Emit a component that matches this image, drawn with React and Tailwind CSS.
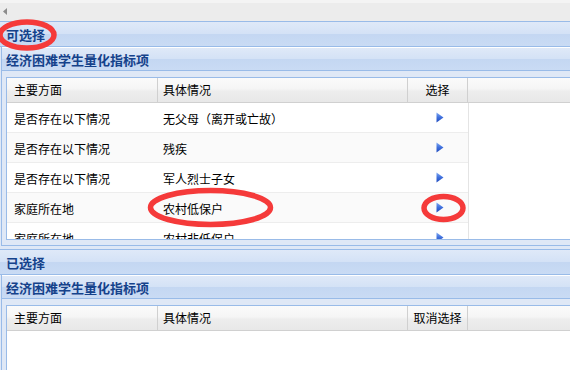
import React from "react";

const hdrGrad =
  "bg-[linear-gradient(180deg,#dfe9f8_0%,#d4e2f6_48%,#c4d7f2_52%,#c9dbf4_100%)]";
const gridHdrGrad =
  "bg-[linear-gradient(180deg,#fbfbfb_0%,#f5f5f5_45%,#ededed_55%,#e8e8e8_100%)]";

function Arrow() {
  return (
    <svg width="8" height="11" viewBox="0 0 8 11">
      <defs>
        <linearGradient id="arrowGrad" x1="0" y1="0" x2="0" y2="1">
          <stop offset="0" stopColor="#7ea8f2" />
          <stop offset="0.5" stopColor="#3f6fdc" />
          <stop offset="1" stopColor="#1d49bd" />
        </linearGradient>
      </defs>
      <polygon points="0.5,0.5 7.5,5.5 0.5,10.5" fill="url(#arrowGrad)" />
    </svg>
  );
}

function GridHeader({ last }) {
  return (
    <div className={`flex h-[25px] border-b border-[#d0d0d0] ${gridHdrGrad} text-black`}>
      <div className="w-[151px] shrink-0 border-r border-[#d0d0d0] pl-[7px] flex items-center">主要方面</div>
      <div className="w-[250px] shrink-0 border-r border-[#d0d0d0] pl-[5px] flex items-center">具体情况</div>
      <div className="w-[60px] shrink-0 border-r border-[#d0d0d0] flex items-center justify-center">{last}</div>
      <div className="flex-1" />
    </div>
  );
}

const rows = [
  ["是否存在以下情况", "无父母（离开或亡故）"],
  ["是否存在以下情况", "残疾"],
  ["是否存在以下情况", "军人烈士子女"],
  ["家庭所在地", "农村低保户"],
  ["家庭所在地", "农村非低保户"],
];

function PanelHeader({ title }) {
  return (
    <div className={`h-[26px] border-t border-b border-[#99bbe8] ${hdrGrad} pl-[6px] flex items-center text-[13px] font-bold text-[#15428b]`}>
      {title}
    </div>
  );
}

function SubHeader() {
  return (
    <div className={`h-[24px] border-t border-white border-b border-b-[#99bbe8] ${hdrGrad} pl-[4px] flex items-center text-[13px] font-bold text-[#15428b]`}>
      经济困难学生量化指标项
    </div>
  );
}

export default function App() {
  return (
    <div className="relative w-[570px] h-[370px] overflow-hidden bg-[#dfe8f6] font-['Noto_Sans_CJK_SC',sans-serif] text-[12px] leading-none">
      {/* top bar */}
      <div className="h-[21px] bg-[#ececec] border-t-[3px] border-[#f4f4f4] flex items-center pl-[3px]">
        <svg width="4" height="7" viewBox="0 0 4 7" className="-mt-[2px]">
          <polygon points="4,0 0,3.5 4,7" fill="#8c8c8c" />
        </svg>
      </div>

      {/* 可选择 */}
      <PanelHeader title="可选择" />
      <div className="ml-[1px] border-l border-b border-[#99bbe8]">
        <SubHeader />
        <div className="pl-[4px] pt-[6px] pb-[5px]">
          <div className="border-l border-t border-b border-[#99bbe8] bg-white">
            <GridHeader last="选择" />
            <div className="h-[136px] overflow-hidden">
              <div className="w-[462px] h-full border-r border-[#e4e4e4]">
                {rows.map((r, i) => (
                  <div
                    key={i}
                    className={`flex h-[30px] border-b border-[#ededed] ${i % 2 === 1 ? "bg-[#fafafa]" : "bg-white"}`}
                  >
                    <div className="w-[151px] shrink-0 pl-[7px] pt-[3px] flex items-center text-black">{r[0]}</div>
                    <div className="w-[250px] shrink-0 pl-[5px] pt-[3px] flex items-center text-black">{r[1]}</div>
                    <div className="w-[60px] shrink-0 flex items-center justify-center pl-[4px]">
                      <Arrow />
                    </div>
                  </div>
                ))}
              </div>
            </div>
          </div>
        </div>
      </div>

      <div className="h-[3px]" />

      {/* 已选择 */}
      <PanelHeader title="已选择" />
      <div className="ml-[1px] border-l border-[#99bbe8]">
        <SubHeader />
        <div className="pl-[4px] pt-[6px]">
          <div className="border-l border-t border-[#99bbe8] bg-white h-[80px]">
            <GridHeader last="取消选择" />
          </div>
        </div>
      </div>

      {/* red annotation marks */}
      <svg
        className="absolute left-0 top-0 pointer-events-none"
        width="570"
        height="370"
        viewBox="0 0 570 370"
      >
        <ellipse cx="27" cy="35" rx="27" ry="13" fill="none" stroke="#f53a3a" strokeWidth="5.5" />
        <ellipse cx="210.5" cy="207.5" rx="60" ry="17" fill="none" stroke="#f53a3a" strokeWidth="5.5" />
        <ellipse cx="443.5" cy="208" rx="19.5" ry="11.5" fill="none" stroke="#f53a3a" strokeWidth="5.5" />
      </svg>
    </div>
  );
}
